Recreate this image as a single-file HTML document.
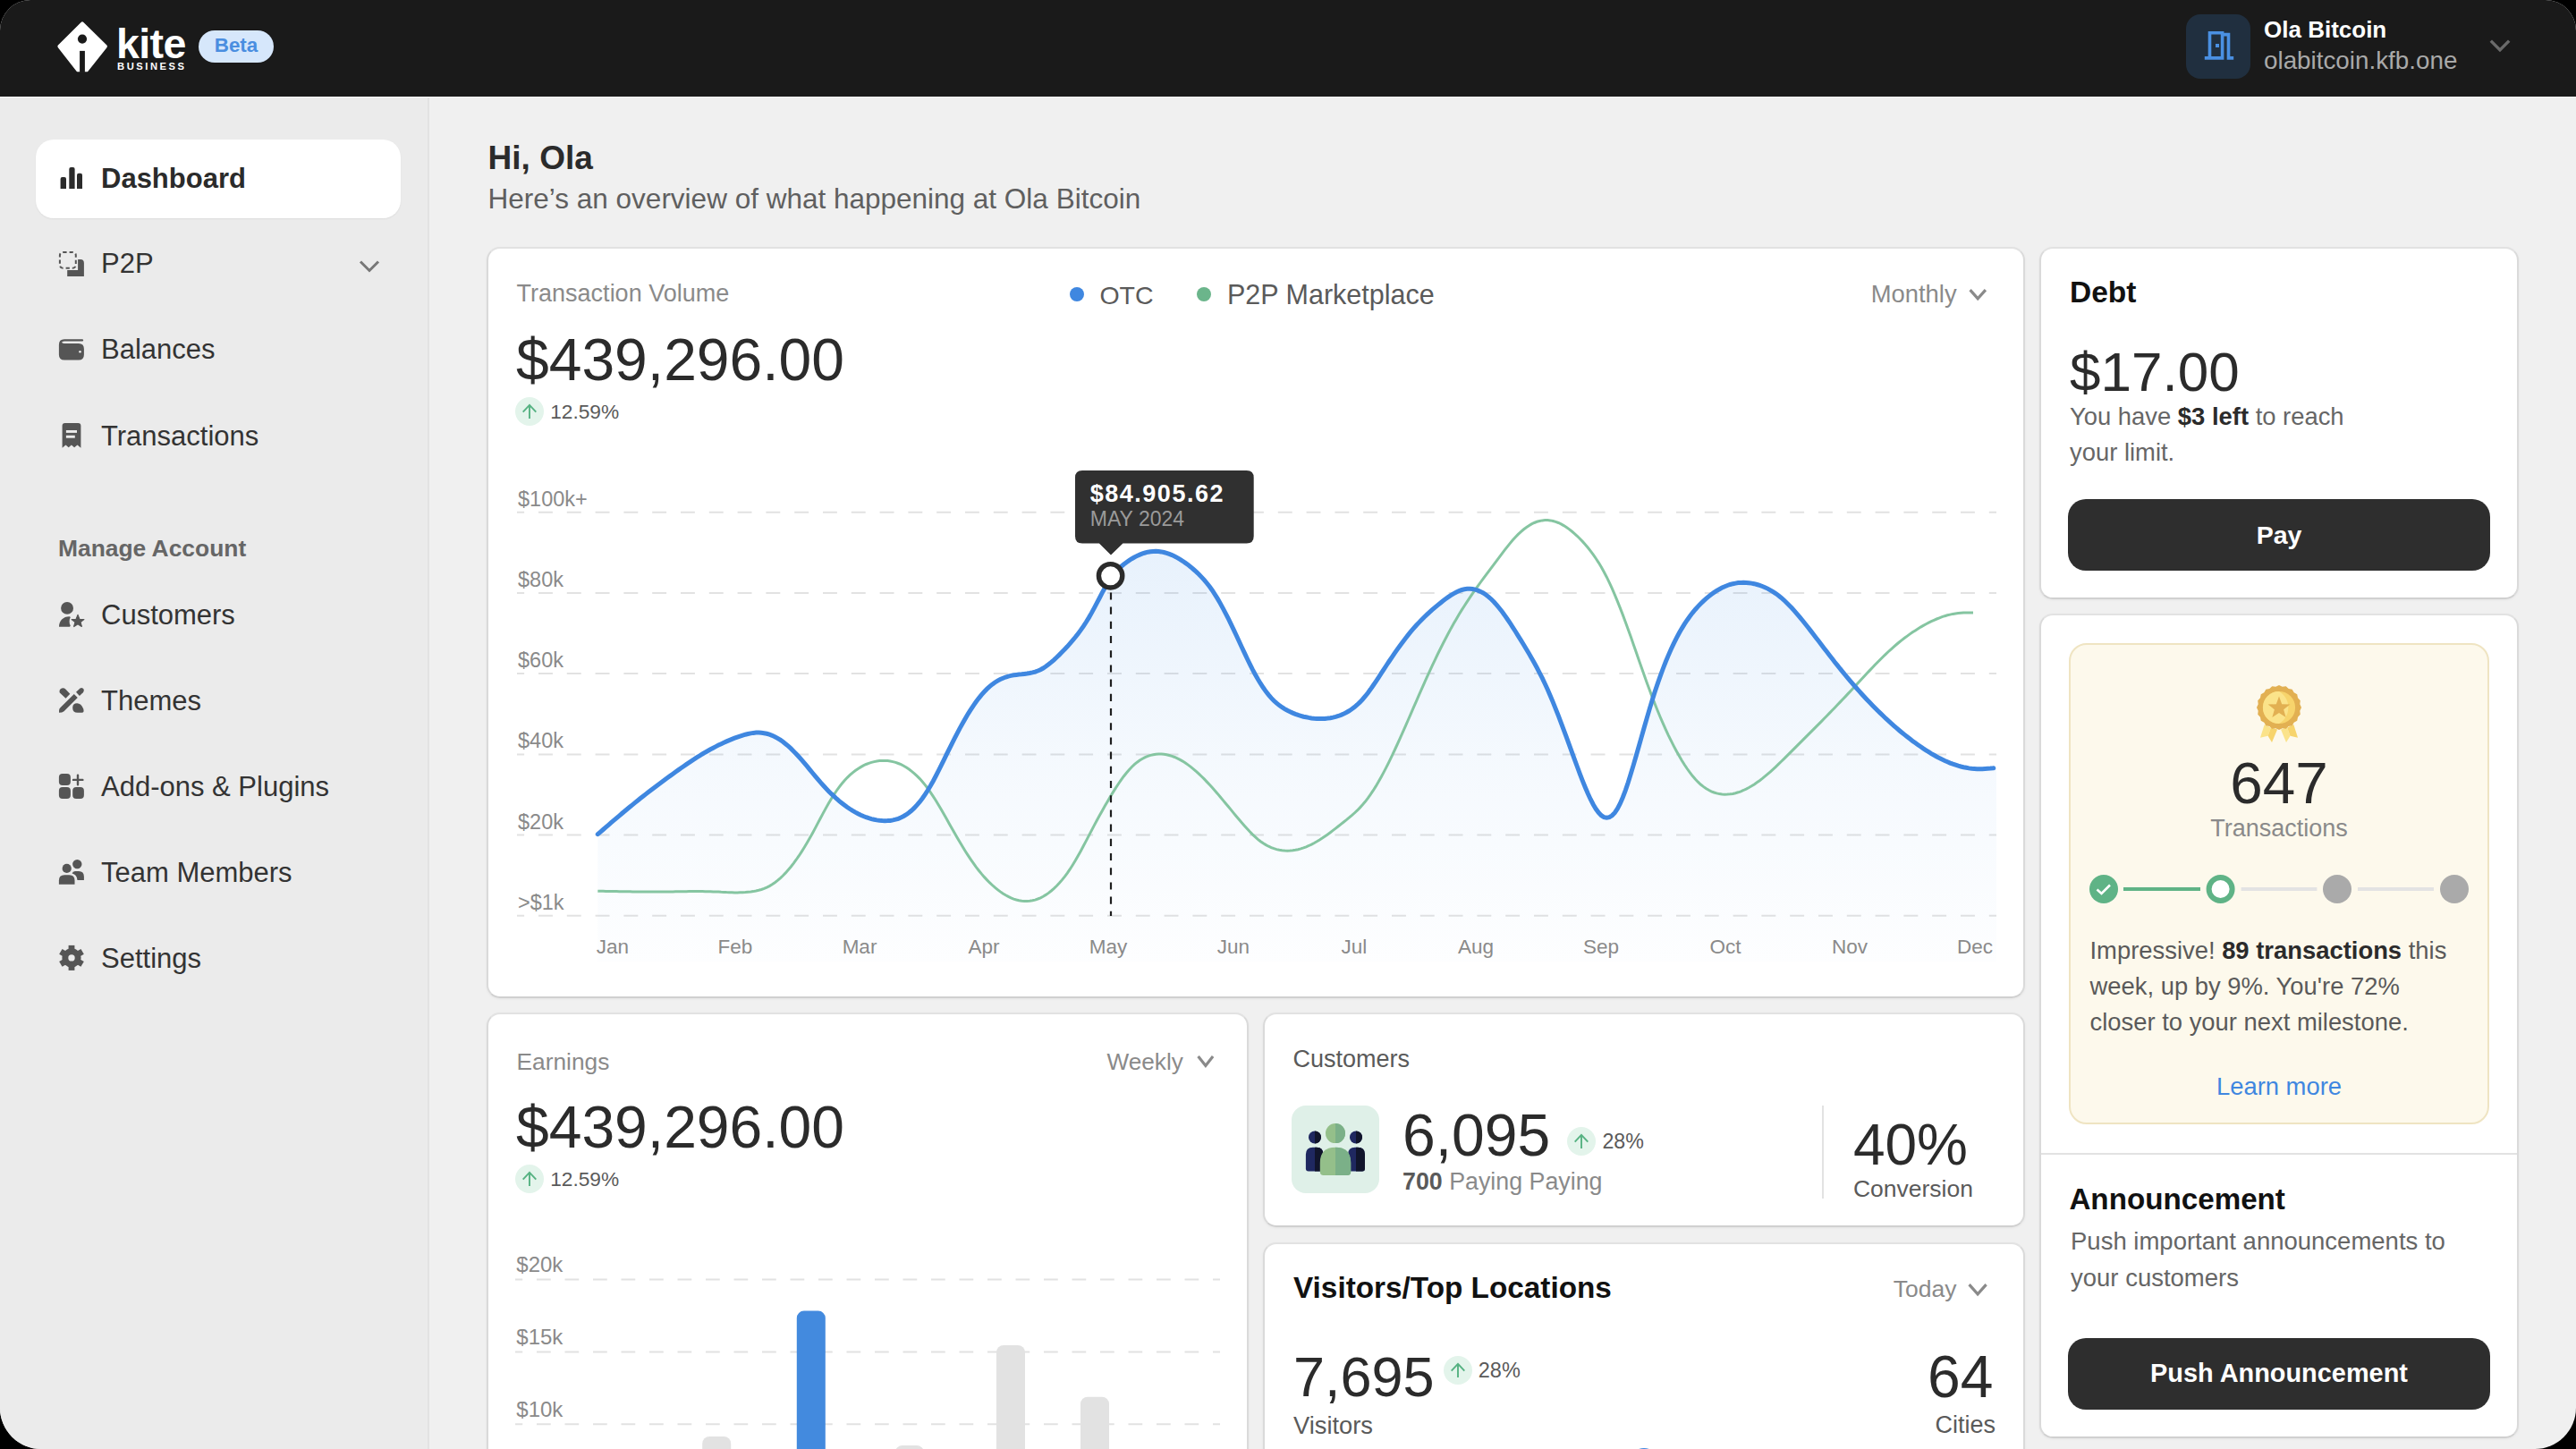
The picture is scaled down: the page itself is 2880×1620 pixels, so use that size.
<!DOCTYPE html>
<html><head><meta charset="utf-8"><title>Kite Business Dashboard</title>
<style>
html,body{margin:0;padding:0;}
body{width:2880px;height:1620px;position:relative;overflow:hidden;background:#000;font-family:"Liberation Sans",sans-serif;}
.t{position:absolute;white-space:nowrap;line-height:1;}
b{font-weight:700;}
</style></head><body>
<div style="position:absolute;left:0;top:0;width:2880px;height:1620px;background:#f0f0f0;border-radius:34px 34px 46px 46px;overflow:hidden;"><div style="position:absolute;left:0px;top:108px;width:480px;height:1512px;background:#ebebeb;"></div><div style="position:absolute;left:478px;top:108px;width:2px;height:1512px;background:#e2e2e2;"></div><div style="position:absolute;left:0px;top:0px;width:2880px;height:108px;background:#1a1a1a;"></div><div style="position:absolute;left:0px;top:108px;width:2880px;height:1px;background:#ffffff;"></div></div><svg style="position:absolute;left:56px;top:18px;" width="80" height="70" viewBox="0 0 80 70">
<path d="M34.6,7 Q36,5.6 37.4,7 L63.4,32.5 Q64.6,33.8 63.4,35.2 L42.6,61.4 Q41.9,62.3 41,62.3 L31,62.3 Q30.1,62.3 29.4,61.4 L8.9,35.2 Q7.7,33.8 8.9,32.5 Z" fill="#fff"/>
<circle cx="36" cy="25.6" r="5.1" fill="#1a1a1a"/>
<rect x="33.1" y="38.9" width="5.8" height="24" fill="#1a1a1a"/>
</svg><div class="t" style="font-size:46.5px;color:#fff;font-weight:700;top:26.33px;letter-spacing:-0.6px;left:130px;">kite</div><div class="t" style="font-size:11.2px;color:#fff;font-weight:700;top:68.82px;letter-spacing:2.55px;left:131px;">BUSINESS</div><div style="position:absolute;left:222px;top:34px;width:84px;height:36px;background:#d6e7fb;border-radius:18px;"></div><div class="t" style="font-size:22.4px;color:#4a8ee0;font-weight:700;top:39.73px;left:-336px;width:1200px;text-align:center;">Beta</div><div style="position:absolute;left:2444px;top:16px;width:72px;height:72px;background:#202f3f;border-radius:16px;"></div><svg style="position:absolute;left:2440px;top:12px;" width="80" height="80" viewBox="0 0 80 80">
<g fill="none" stroke="#4a90e2" stroke-width="3.6">
<path d="M24.8,52.9 L44.6,52.9 L44.6,24.8 L30.5,24.8 L30.5,52.9"/>
<path d="M44.6,26.6 L51.5,26.6 L51.5,52.9 L57.2,52.9"/>
</g>
<rect x="37" y="37" width="4" height="4" fill="#4a90e2"/>
</svg><div class="t" style="font-size:26px;color:#ffffff;font-weight:700;top:19.89px;left:2531px;">Ola Bitcoin</div><div class="t" style="font-size:27.8px;color:#a9a9a9;font-weight:400;top:54.36px;left:2531px;">olabitcoin.kfb.one</div><svg style="position:absolute;left:2780px;top:40px;" width="30" height="24" viewBox="0 0 30 24"><path d="M4.8,5.6 L15,15.8 L25.2,5.6" fill="none" stroke="#6a6a6a" stroke-width="3.4"/></svg><div style="position:absolute;left:40px;top:156px;width:408px;height:88px;background:#fff;border-radius:20px;box-shadow:0 1px 2px rgba(0,0,0,0.06);"></div><svg style="position:absolute;left:56px;top:174px;" width="48" height="48" viewBox="0 0 48 48"><g fill="#2b2b2b">
<path d="M11.6,26 Q11.6,24 13.6,24 L16,24 Q18,24 18,26 L18,37 L11.6,37 Z"/>
<path d="M21.3,15 Q21.3,13 23.3,13 L25.6,13 Q27.6,13 27.6,15 L27.6,37 L21.3,37 Z"/>
<path d="M30,21.8 Q30,19.8 32,19.8 L34,19.8 Q36,19.8 36,21.8 L36,37 L30,37 Z"/>
</g></svg><div class="t" style="font-size:31px;color:#2b2b2b;font-weight:700;top:184.15px;left:113px;">Dashboard</div><svg style="position:absolute;left:56px;top:270px;" width="48" height="48" viewBox="0 0 48 48">
<rect x="10.9" y="11.9" width="17.9" height="17.9" rx="3.5" fill="none" stroke="#555555" stroke-width="2" stroke-dasharray="4.2 3"/>
<path d="M31.1,20 L34,20 Q37.9,20 37.9,24 L37.9,38.9 L19.2,38.9 L19.2,32.1 L31.1,32.1 Z" fill="#555555"/>
</svg><div class="t" style="font-size:31px;color:#333;font-weight:400;top:279.35px;left:113px;">P2P</div><svg style="position:absolute;left:398px;top:286px;" width="30" height="24" viewBox="0 0 30 24"><path d="M5,6.5 L15,16.5 L25,6.5" fill="none" stroke="#777" stroke-width="3"/></svg><svg style="position:absolute;left:56px;top:366px;" width="48" height="48" viewBox="0 0 48 48">
<path d="M16,18 L32,18 Q37.9,18 37.9,24 L37.9,30.6 Q37.9,36.6 32,36.6 L16,36.6 Q9.9,36.6 9.9,30.6 L9.9,19.5 Q9.9,13.2 16,13.2 L36.5,13.2 Q38,14.4 36.5,15.6 L16,15.6 Q12.5,15.6 13.5,17.2 Q14.2,18 16,18 Z" fill="#555555"/>
<circle cx="33.5" cy="27.3" r="1.3" fill="#ebebeb"/>
</svg><div class="t" style="font-size:31px;color:#333;font-weight:400;top:375.45px;left:113px;">Balances</div><svg style="position:absolute;left:56px;top:462px;" width="48" height="48" viewBox="0 0 48 48">
<path d="M13.6,14 Q13.6,10.9 16.6,10.9 L31.4,10.9 Q34.4,10.9 34.4,14 L34.4,38.7 L30.5,35.6 L27.1,38.2 L23.9,35.6 L20.7,38.2 L17.5,35.6 L13.6,38.7 Z" fill="#555555"/>
<rect x="17.9" y="19" width="12.1" height="2.9" fill="#ebebeb"/>
<rect x="17.9" y="24.8" width="9.9" height="2.9" fill="#ebebeb"/>
</svg><div class="t" style="font-size:31px;color:#333;font-weight:400;top:471.75px;left:113px;">Transactions</div><div class="t" style="font-size:26.4px;color:#666;font-weight:700;top:600.25px;left:65px;">Manage Account</div><svg style="position:absolute;left:56px;top:664px;" width="48" height="48" viewBox="0 0 48 48"><g fill="#555555">
<circle cx="19.05" cy="15.9" r="6.95"/>
<path d="M10,36.8 C10,30 14.5,25.2 21.8,25.2 L22.8,26.1 C21.2,28.8 21.2,33.2 22.8,35.6 L22,36.8 Z"/>
<path d="M31,23.4 L32.9,28.3 L37.9,28.5 L34,31.6 L35.3,36.5 L31,33.8 L26.7,36.5 L28,31.6 L24.1,28.5 L29.1,28.3 Z" stroke="#555555" stroke-width="1.2" stroke-linejoin="round"/>
</g></svg><div class="t" style="font-size:31px;color:#333;font-weight:400;top:672.35px;left:113px;">Customers</div><svg style="position:absolute;left:56px;top:760px;" width="48" height="48" viewBox="0 0 48 48"><g fill="#555555">
<path d="M10.6,14.2 Q10,11 13,9.6 Q15.5,8.7 17.3,10.6 L22.3,15.8 L17.5,20.8 L11.6,15.3 Z"/>
<path d="M29,13.8 L33.5,9.6 Q36,8 37.5,10.5 Q38.5,12.5 36.8,14.3 L32.9,18 Z"/>
<path d="M26.8,16 L30.8,19.9 L15.5,35.3 Q13.5,36.8 10,36.8 L10,34.5 Q10,32.2 11.6,30.9 Z"/>
<path d="M25.2,31.3 Q25.2,26.2 30.2,26.2 Q34.6,26.2 37.2,32.5 Q38.5,36.8 35.5,36.8 L30.8,36.8 Q25.2,36.8 25.2,31.3 Z"/>
</g></svg><div class="t" style="font-size:31px;color:#333;font-weight:400;top:767.75px;left:113px;">Themes</div><svg style="position:absolute;left:56px;top:856px;" width="48" height="48" viewBox="0 0 48 48"><g fill="#555555">
<rect x="9.9" y="8.9" width="13" height="13" rx="4"/>
<rect x="9.9" y="24" width="13" height="12.9" rx="4"/>
<rect x="25.2" y="24" width="12.7" height="12.9" rx="4"/>
</g>
<g stroke="#555555" stroke-width="2.4" stroke-linecap="round"><path d="M26,15.9 L36.4,15.9 M31,10.6 L31,21.2"/></g></svg><div class="t" style="font-size:31px;color:#333;font-weight:400;top:863.75px;left:113px;">Add-ons &amp; Plugins</div><svg style="position:absolute;left:56px;top:952px;" width="48" height="48" viewBox="0 0 48 48"><g fill="#555555">
<circle cx="18.7" cy="18.9" r="5.1"/>
<path d="M9.9,32.5 Q9.9,26.3 16,26.3 L21.5,26.3 Q27.5,26.3 27.5,32.5 L27.5,36.8 L9.9,36.8 Z"/>
<circle cx="30.3" cy="14.1" r="5.2"/>
<path d="M24.6,24.6 Q25.3,21.9 28,21.9 L32,21.9 Q37.9,21.9 37.9,28 L37.9,32 L30.5,32 Q30,26 24.6,24.6 Z"/>
</g></svg><div class="t" style="font-size:31px;color:#333;font-weight:400;top:959.75px;left:113px;">Team Members</div><svg style="position:absolute;left:56px;top:1048px;" width="48" height="48" viewBox="0 0 48 48"><g transform="translate(24,22.9)" fill="#555555"><circle r="10.6"/><rect x="-3.4" y="-14" width="6.8" height="7" transform="rotate(0)"/><rect x="-3.4" y="-14" width="6.8" height="7" transform="rotate(60)"/><rect x="-3.4" y="-14" width="6.8" height="7" transform="rotate(120)"/><rect x="-3.4" y="-14" width="6.8" height="7" transform="rotate(180)"/><rect x="-3.4" y="-14" width="6.8" height="7" transform="rotate(240)"/><rect x="-3.4" y="-14" width="6.8" height="7" transform="rotate(300)"/><circle r="3.7" fill="#ebebeb"/></g></svg><div class="t" style="font-size:31px;color:#333;font-weight:400;top:1055.75px;left:113px;">Settings</div><div class="t" style="font-size:37px;color:#2b2b2b;font-weight:700;top:158.17px;left:545.6px;">Hi, Ola</div><div class="t" style="font-size:31.5px;color:#5f5f5f;font-weight:400;top:207.33px;left:545.6px;">Here’s an overview of what happening at Ola Bitcoin</div><div style="position:absolute;left:544px;top:276px;width:1720px;height:840px;background:#fff;border:2px solid #dadada;border-top-color:#e2e2e2;border-bottom-color:#d0d0d0;border-radius:15px;box-sizing:border-box;box-shadow:0 1px 3px rgba(0,0,0,0.05);"></div><div class="t" style="font-size:27px;color:#8a8a8a;font-weight:400;top:314.94px;left:577.6px;">Transaction Volume</div><svg style="position:absolute;left:1196px;top:320.7px;" width="16" height="16" viewBox="0 0 16 16"><circle cx="8" cy="8" r="8" fill="#3f87e0"/></svg><div class="t" style="font-size:28.5px;color:#5a5a5a;font-weight:400;top:316.07px;left:1229.4px;">OTC</div><svg style="position:absolute;left:1338px;top:320.7px;" width="16" height="16" viewBox="0 0 16 16"><circle cx="8" cy="8" r="8" fill="#6bb58b"/></svg><div class="t" style="font-size:30.5px;color:#5a5a5a;font-weight:400;top:314.38px;left:1372px;">P2P Marketplace</div><div class="t" style="font-size:27.4px;color:#8a8a8a;font-weight:400;top:314.60px;left:2091.7px;">Monthly</div><svg style="position:absolute;left:2196.7px;top:318.6px;" width="28.5" height="19.899999999999977" viewBox="0 0 28.5 19.899999999999977"><path d="M5.6,5.1 L14.2,14.8 L22.9,5.1" fill="none" stroke="#8a8a8a" stroke-width="3.2"/></svg><div class="t" style="font-size:66px;color:#2b2b2b;font-weight:400;top:369.12px;left:577px;">$439,296.00</div><svg style="position:absolute;left:576px;top:443.8px;" width="32" height="32" viewBox="0 0 32 32"><circle cx="16" cy="16" r="16" fill="#e3f4eb"/><path d="M16,24 L16,8.8 M8.7,16.7 L16,8.8 L23.3,16.7" fill="none" stroke="#56b282" stroke-width="1.9"/></svg><div class="t" style="font-size:22.7px;color:#5a5a5a;font-weight:400;top:448.58px;left:615.2px;">12.59%</div><svg style="position:absolute;left:0px;top:0px;pointer-events:none;" width="2880" height="1620" viewBox="0 0 2880 1620">
<defs><linearGradient id="ga" x1="0" y1="617" x2="0" y2="1075" gradientUnits="userSpaceOnUse">
<stop offset="0" stop-color="#3d8fe8" stop-opacity="0.12"/><stop offset="0.5" stop-color="#3d8fe8" stop-opacity="0.055"/><stop offset="1" stop-color="#3d8fe8" stop-opacity="0.01"/></linearGradient></defs>
<line x1="578" y1="572.7" x2="2232" y2="572.7" stroke="#e2e2e2" stroke-width="2" stroke-dasharray="15.9 15.9" stroke-dashoffset="7.8"/><line x1="578" y1="662.9" x2="2232" y2="662.9" stroke="#e2e2e2" stroke-width="2" stroke-dasharray="15.9 15.9" stroke-dashoffset="7.8"/><line x1="578" y1="753.1" x2="2232" y2="753.1" stroke="#e2e2e2" stroke-width="2" stroke-dasharray="15.9 15.9" stroke-dashoffset="7.8"/><line x1="578" y1="843.4" x2="2232" y2="843.4" stroke="#e2e2e2" stroke-width="2" stroke-dasharray="15.9 15.9" stroke-dashoffset="7.8"/><line x1="578" y1="933.6" x2="2232" y2="933.6" stroke="#e2e2e2" stroke-width="2" stroke-dasharray="15.9 15.9" stroke-dashoffset="7.8"/><line x1="578" y1="1023.8" x2="2232" y2="1023.8" stroke="#e2e2e2" stroke-width="2" stroke-dasharray="15.9 15.9" stroke-dashoffset="7.8"/>
<path d="M668.3,932.7 L671.3,930.1 L674.3,927.5 L677.3,924.9 L680.3,922.3 L683.3,919.7 L686.3,917.2 L689.3,914.6 L692.3,912.1 L695.3,909.5 L698.3,907.0 L701.3,904.5 L704.3,902.0 L707.3,899.6 L710.3,897.1 L713.3,894.7 L716.3,892.3 L719.3,890.0 L722.3,887.6 L725.3,885.3 L728.3,883.0 L731.3,880.7 L734.3,878.4 L737.3,876.2 L740.3,874.0 L743.3,871.7 L746.3,869.5 L749.3,867.4 L752.3,865.2 L755.3,863.0 L758.3,860.9 L761.3,858.8 L764.3,856.7 L767.3,854.6 L770.3,852.6 L773.3,850.6 L776.3,848.7 L779.3,846.7 L782.3,844.9 L785.3,843.0 L788.3,841.2 L791.3,839.5 L794.3,837.8 L797.3,836.2 L800.3,834.6 L803.3,833.1 L806.3,831.7 L809.3,830.3 L812.3,828.9 L815.3,827.6 L818.3,826.4 L821.3,825.2 L824.3,824.1 L827.3,823.1 L830.3,822.1 L833.3,821.2 L836.3,820.5 L839.3,819.9 L842.3,819.4 L845.3,819.1 L848.3,819.1 L851.3,819.3 L854.3,819.7 L857.3,820.3 L860.3,821.2 L863.3,822.3 L866.3,823.7 L869.3,825.3 L872.3,827.2 L875.3,829.3 L878.3,831.7 L881.3,834.2 L884.3,836.9 L887.3,839.9 L890.3,843.0 L893.3,846.3 L896.3,849.7 L899.3,853.2 L902.3,856.7 L905.3,860.4 L908.3,864.0 L911.3,867.6 L914.3,871.2 L917.3,874.7 L920.3,878.0 L923.3,881.3 L926.3,884.4 L929.3,887.4 L932.3,890.2 L935.3,893.0 L938.3,895.6 L941.3,898.0 L944.3,900.3 L947.3,902.5 L950.3,904.5 L953.3,906.4 L956.3,908.1 L959.3,909.7 L962.3,911.2 L965.3,912.5 L968.3,913.7 L971.3,914.7 L974.3,915.6 L977.3,916.3 L980.3,916.9 L983.3,917.3 L986.3,917.6 L989.3,917.7 L992.3,917.6 L995.3,917.4 L998.3,916.9 L1001.3,916.2 L1004.3,915.3 L1007.3,914.0 L1010.3,912.5 L1013.3,910.7 L1016.3,908.5 L1019.3,906.0 L1022.3,903.2 L1025.3,899.9 L1028.3,896.4 L1031.3,892.5 L1034.3,888.2 L1037.3,883.5 L1040.3,878.5 L1043.3,873.2 L1046.3,867.5 L1049.3,861.7 L1052.3,855.7 L1055.3,849.6 L1058.3,843.4 L1061.3,837.3 L1064.3,831.3 L1067.3,825.4 L1070.3,819.6 L1073.3,813.9 L1076.3,808.5 L1079.3,803.2 L1082.3,798.1 L1085.3,793.4 L1088.3,788.8 L1091.3,784.6 L1094.3,780.6 L1097.3,776.9 L1100.3,773.5 L1103.3,770.4 L1106.3,767.7 L1109.3,765.2 L1112.3,763.0 L1115.3,761.1 L1118.3,759.5 L1121.3,758.2 L1124.3,757.0 L1127.3,756.1 L1130.3,755.4 L1133.3,754.8 L1136.3,754.4 L1139.3,754.1 L1142.3,753.8 L1145.3,753.4 L1148.3,753.0 L1151.3,752.5 L1154.3,751.9 L1157.3,751.1 L1160.3,750.0 L1163.3,748.7 L1166.3,747.0 L1169.3,745.0 L1172.3,742.8 L1175.3,740.4 L1178.3,737.8 L1181.3,735.0 L1184.3,732.1 L1187.3,729.1 L1190.3,726.0 L1193.3,722.8 L1196.3,719.4 L1199.3,715.9 L1202.3,712.3 L1205.3,708.4 L1208.3,704.4 L1211.3,700.1 L1214.3,695.5 L1217.3,690.6 L1220.3,685.4 L1223.3,679.9 L1226.3,674.2 L1229.3,668.5 L1232.3,662.7 L1235.3,657.2 L1238.3,652.0 L1241.3,647.2 L1244.3,643.1 L1247.3,639.4 L1250.3,636.3 L1253.3,633.5 L1256.3,631.0 L1259.3,628.7 L1262.3,626.6 L1265.3,624.7 L1268.3,623.0 L1271.3,621.4 L1274.3,620.1 L1277.3,618.9 L1280.3,618.0 L1283.3,617.2 L1286.3,616.7 L1289.3,616.4 L1292.3,616.3 L1295.3,616.5 L1298.3,616.9 L1301.3,617.5 L1304.3,618.3 L1307.3,619.4 L1310.3,620.6 L1313.3,622.0 L1316.3,623.6 L1319.3,625.4 L1322.3,627.3 L1325.3,629.4 L1328.3,631.6 L1331.3,633.9 L1334.3,636.5 L1337.3,639.1 L1340.3,642.0 L1343.3,645.1 L1346.3,648.4 L1349.3,652.0 L1352.3,655.8 L1355.3,660.0 L1358.3,664.6 L1361.3,669.4 L1364.3,674.6 L1367.3,680.1 L1370.3,685.8 L1373.3,691.7 L1376.3,697.8 L1379.3,704.1 L1382.3,710.5 L1385.3,717.0 L1388.3,723.5 L1391.3,729.9 L1394.3,736.3 L1397.3,742.4 L1400.3,748.4 L1403.3,754.0 L1406.3,759.3 L1409.3,764.2 L1412.3,768.8 L1415.3,773.1 L1418.3,776.9 L1421.3,780.4 L1424.3,783.5 L1427.3,786.2 L1430.3,788.6 L1433.3,790.7 L1436.3,792.6 L1439.3,794.3 L1442.3,795.7 L1445.3,797.1 L1448.3,798.3 L1451.3,799.4 L1454.3,800.3 L1457.3,801.2 L1460.3,801.8 L1463.3,802.4 L1466.3,802.9 L1469.3,803.2 L1472.3,803.4 L1475.3,803.5 L1478.3,803.5 L1481.3,803.4 L1484.3,803.1 L1487.3,802.7 L1490.3,802.1 L1493.3,801.4 L1496.3,800.5 L1499.3,799.4 L1502.3,798.1 L1505.3,796.5 L1508.3,794.8 L1511.3,792.8 L1514.3,790.6 L1517.3,788.0 L1520.3,785.2 L1523.3,782.0 L1526.3,778.5 L1529.3,774.7 L1532.3,770.6 L1535.3,766.3 L1538.3,761.8 L1541.3,757.3 L1544.3,752.7 L1547.3,748.1 L1550.3,743.5 L1553.3,739.0 L1556.3,734.6 L1559.3,730.2 L1562.3,725.9 L1565.3,721.7 L1568.3,717.7 L1571.3,713.7 L1574.3,709.9 L1577.3,706.2 L1580.3,702.7 L1583.3,699.3 L1586.3,696.1 L1589.3,693.0 L1592.3,690.0 L1595.3,687.2 L1598.3,684.4 L1601.3,681.7 L1604.3,679.1 L1607.3,676.6 L1610.3,674.2 L1613.3,671.8 L1616.3,669.6 L1619.3,667.4 L1622.3,665.4 L1625.3,663.6 L1628.3,662.0 L1631.3,660.6 L1634.3,659.5 L1637.3,658.8 L1640.3,658.3 L1643.3,658.2 L1646.3,658.5 L1649.3,659.1 L1652.3,660.1 L1655.3,661.4 L1658.3,663.0 L1661.3,665.0 L1664.3,667.3 L1667.3,670.0 L1670.3,673.0 L1673.3,676.4 L1676.3,680.0 L1679.3,683.8 L1682.3,687.9 L1685.3,692.2 L1688.3,696.7 L1691.3,701.3 L1694.3,706.0 L1697.3,710.8 L1700.3,715.6 L1703.3,720.5 L1706.3,725.5 L1709.3,730.5 L1712.3,735.7 L1715.3,741.0 L1718.3,746.5 L1721.3,752.3 L1724.3,758.2 L1727.3,764.5 L1730.3,771.0 L1733.3,777.9 L1736.3,785.1 L1739.3,792.6 L1742.3,800.2 L1745.3,808.1 L1748.3,816.1 L1751.3,824.2 L1754.3,832.4 L1757.3,840.7 L1760.3,848.9 L1763.3,857.0 L1766.3,865.1 L1769.3,872.9 L1772.3,880.3 L1775.3,887.3 L1778.3,893.7 L1781.3,899.5 L1784.3,904.5 L1787.3,908.6 L1790.3,911.7 L1793.3,913.6 L1796.3,914.3 L1799.3,913.7 L1802.3,911.8 L1805.3,908.6 L1808.3,904.1 L1811.3,898.4 L1814.3,891.5 L1817.3,883.6 L1820.3,874.7 L1823.3,865.1 L1826.3,855.1 L1829.3,844.7 L1832.3,834.2 L1835.3,823.6 L1838.3,813.0 L1841.3,802.6 L1844.3,792.4 L1847.3,782.6 L1850.3,773.1 L1853.3,764.1 L1856.3,755.6 L1859.3,747.5 L1862.3,739.8 L1865.3,732.6 L1868.3,725.8 L1871.3,719.4 L1874.3,713.4 L1877.3,707.8 L1880.3,702.6 L1883.3,697.7 L1886.3,693.2 L1889.3,689.0 L1892.3,685.1 L1895.3,681.5 L1898.3,678.1 L1901.3,675.0 L1904.3,672.1 L1907.3,669.4 L1910.3,666.9 L1913.3,664.5 L1916.3,662.4 L1919.3,660.4 L1922.3,658.7 L1925.3,657.1 L1928.3,655.7 L1931.3,654.5 L1934.3,653.5 L1937.3,652.7 L1940.3,652.1 L1943.3,651.6 L1946.3,651.4 L1949.3,651.3 L1952.3,651.4 L1955.3,651.7 L1958.3,652.1 L1961.3,652.7 L1964.3,653.5 L1967.3,654.4 L1970.3,655.5 L1973.3,656.7 L1976.3,658.1 L1979.3,659.8 L1982.3,661.6 L1985.3,663.6 L1988.3,665.8 L1991.3,668.2 L1994.3,670.8 L1997.3,673.7 L2000.3,676.7 L2003.3,679.8 L2006.3,683.1 L2009.3,686.6 L2012.3,690.1 L2015.3,693.8 L2018.3,697.5 L2021.3,701.3 L2024.3,705.1 L2027.3,709.0 L2030.3,712.9 L2033.3,716.8 L2036.3,720.7 L2039.3,724.7 L2042.3,728.6 L2045.3,732.5 L2048.3,736.3 L2051.3,740.2 L2054.3,743.9 L2057.3,747.7 L2060.3,751.3 L2063.3,755.0 L2066.3,758.6 L2069.3,762.1 L2072.3,765.6 L2075.3,769.0 L2078.3,772.4 L2081.3,775.7 L2084.3,779.0 L2087.3,782.2 L2090.3,785.3 L2093.3,788.4 L2096.3,791.5 L2099.3,794.5 L2102.3,797.4 L2105.3,800.3 L2108.3,803.2 L2111.3,805.9 L2114.3,808.6 L2117.3,811.3 L2120.3,813.9 L2123.3,816.5 L2126.3,819.0 L2129.3,821.4 L2132.3,823.8 L2135.3,826.1 L2138.3,828.4 L2141.3,830.6 L2144.3,832.7 L2147.3,834.8 L2150.3,836.9 L2153.3,838.8 L2156.3,840.7 L2159.3,842.6 L2162.3,844.3 L2165.3,846.0 L2168.3,847.6 L2171.3,849.1 L2174.3,850.5 L2177.3,851.8 L2180.3,853.1 L2183.3,854.2 L2186.3,855.2 L2189.3,856.2 L2192.3,857.0 L2195.3,857.7 L2198.3,858.3 L2201.3,858.9 L2204.3,859.3 L2207.3,859.5 L2210.3,859.7 L2213.3,859.7 L2216.3,859.7 L2219.3,859.5 L2222.3,859.3 L2225.3,859.1 L2228.3,858.8 L2228.8,858.7 L2232,858.7 L2232,1075 L668.3,1075 Z" fill="url(#ga)"/>
<path d="M668.3,996.2 L671.3,996.3 L674.3,996.3 L677.3,996.4 L680.3,996.4 L683.3,996.5 L686.3,996.5 L689.3,996.6 L692.3,996.7 L695.3,996.7 L698.3,996.7 L701.3,996.8 L704.3,996.8 L707.3,996.9 L710.3,996.9 L713.3,996.9 L716.3,997.0 L719.3,997.0 L722.3,997.0 L725.3,997.0 L728.3,997.0 L731.3,997.0 L734.3,997.0 L737.3,997.0 L740.3,997.0 L743.3,997.0 L746.3,996.9 L749.3,996.9 L752.3,996.9 L755.3,996.8 L758.3,996.8 L761.3,996.7 L764.3,996.7 L767.3,996.7 L770.3,996.6 L773.3,996.6 L776.3,996.6 L779.3,996.6 L782.3,996.6 L785.3,996.6 L788.3,996.7 L791.3,996.7 L794.3,996.8 L797.3,996.9 L800.3,997.0 L803.3,997.1 L806.3,997.3 L809.3,997.4 L812.3,997.6 L815.3,997.7 L818.3,997.8 L821.3,997.9 L824.3,997.9 L827.3,997.8 L830.3,997.7 L833.3,997.6 L836.3,997.3 L839.3,997.0 L842.3,996.6 L845.3,996.0 L848.3,995.3 L851.3,994.5 L854.3,993.4 L857.3,992.1 L860.3,990.6 L863.3,988.8 L866.3,986.7 L869.3,984.4 L872.3,981.8 L875.3,979.0 L878.3,975.9 L881.3,972.5 L884.3,969.0 L887.3,965.1 L890.3,961.0 L893.3,956.7 L896.3,952.1 L899.3,947.3 L902.3,942.3 L905.3,937.1 L908.3,931.7 L911.3,926.1 L914.3,920.4 L917.3,914.7 L920.3,909.1 L923.3,903.6 L926.3,898.3 L929.3,893.3 L932.3,888.5 L935.3,884.0 L938.3,879.8 L941.3,876.0 L944.3,872.5 L947.3,869.3 L950.3,866.4 L953.3,863.8 L956.3,861.5 L959.3,859.4 L962.3,857.6 L965.3,855.9 L968.3,854.5 L971.3,853.3 L974.3,852.4 L977.3,851.6 L980.3,851.0 L983.3,850.6 L986.3,850.4 L989.3,850.4 L992.3,850.6 L995.3,851.0 L998.3,851.6 L1001.3,852.4 L1004.3,853.5 L1007.3,854.7 L1010.3,856.2 L1013.3,858.0 L1016.3,860.0 L1019.3,862.3 L1022.3,864.8 L1025.3,867.6 L1028.3,870.6 L1031.3,874.0 L1034.3,877.6 L1037.3,881.5 L1040.3,885.8 L1043.3,890.3 L1046.3,895.0 L1049.3,900.0 L1052.3,905.1 L1055.3,910.3 L1058.3,915.6 L1061.3,920.9 L1064.3,926.2 L1067.3,931.5 L1070.3,936.7 L1073.3,941.8 L1076.3,946.8 L1079.3,951.7 L1082.3,956.4 L1085.3,960.9 L1088.3,965.2 L1091.3,969.4 L1094.3,973.2 L1097.3,976.9 L1100.3,980.4 L1103.3,983.6 L1106.3,986.7 L1109.3,989.5 L1112.3,992.2 L1115.3,994.6 L1118.3,996.9 L1121.3,999.0 L1124.3,1000.8 L1127.3,1002.4 L1130.3,1003.9 L1133.3,1005.1 L1136.3,1006.0 L1139.3,1006.8 L1142.3,1007.3 L1145.3,1007.5 L1148.3,1007.5 L1151.3,1007.3 L1154.3,1006.8 L1157.3,1006.1 L1160.3,1005.0 L1163.3,1003.8 L1166.3,1002.2 L1169.3,1000.4 L1172.3,998.4 L1175.3,996.0 L1178.3,993.4 L1181.3,990.5 L1184.3,987.3 L1187.3,983.9 L1190.3,980.1 L1193.3,976.1 L1196.3,971.7 L1199.3,967.0 L1202.3,962.1 L1205.3,956.8 L1208.3,951.4 L1211.3,945.8 L1214.3,940.1 L1217.3,934.4 L1220.3,928.6 L1223.3,922.9 L1226.3,917.3 L1229.3,911.8 L1232.3,906.4 L1235.3,901.1 L1238.3,895.9 L1241.3,890.8 L1244.3,885.9 L1247.3,881.1 L1250.3,876.5 L1253.3,872.2 L1256.3,868.0 L1259.3,864.2 L1262.3,860.7 L1265.3,857.5 L1268.3,854.7 L1271.3,852.2 L1274.3,850.0 L1277.3,848.2 L1280.3,846.6 L1283.3,845.4 L1286.3,844.4 L1289.3,843.7 L1292.3,843.2 L1295.3,843.0 L1298.3,843.1 L1301.3,843.3 L1304.3,843.8 L1307.3,844.5 L1310.3,845.4 L1313.3,846.5 L1316.3,847.9 L1319.3,849.4 L1322.3,851.1 L1325.3,853.0 L1328.3,855.1 L1331.3,857.4 L1334.3,859.8 L1337.3,862.4 L1340.3,865.1 L1343.3,868.0 L1346.3,870.9 L1349.3,874.1 L1352.3,877.3 L1355.3,880.6 L1358.3,884.0 L1361.3,887.4 L1364.3,891.0 L1367.3,894.6 L1370.3,898.2 L1373.3,901.8 L1376.3,905.4 L1379.3,909.1 L1382.3,912.7 L1385.3,916.2 L1388.3,919.8 L1391.3,923.2 L1394.3,926.5 L1397.3,929.8 L1400.3,932.8 L1403.3,935.6 L1406.3,938.3 L1409.3,940.7 L1412.3,942.8 L1415.3,944.6 L1418.3,946.2 L1421.3,947.6 L1424.3,948.7 L1427.3,949.6 L1430.3,950.3 L1433.3,950.8 L1436.3,951.1 L1439.3,951.2 L1442.3,951.1 L1445.3,950.8 L1448.3,950.3 L1451.3,949.7 L1454.3,948.9 L1457.3,947.9 L1460.3,946.8 L1463.3,945.5 L1466.3,944.1 L1469.3,942.5 L1472.3,940.8 L1475.3,939.0 L1478.3,937.1 L1481.3,935.0 L1484.3,932.9 L1487.3,930.7 L1490.3,928.4 L1493.3,926.1 L1496.3,923.8 L1499.3,921.4 L1502.3,919.0 L1505.3,916.7 L1508.3,914.2 L1511.3,911.7 L1514.3,909.0 L1517.3,906.2 L1520.3,903.1 L1523.3,899.8 L1526.3,896.3 L1529.3,892.4 L1532.3,888.2 L1535.3,883.7 L1538.3,878.9 L1541.3,873.8 L1544.3,868.4 L1547.3,862.9 L1550.3,857.1 L1553.3,851.1 L1556.3,844.9 L1559.3,838.5 L1562.3,832.0 L1565.3,825.4 L1568.3,818.7 L1571.3,811.9 L1574.3,805.0 L1577.3,798.1 L1580.3,791.2 L1583.3,784.3 L1586.3,777.4 L1589.3,770.6 L1592.3,763.8 L1595.3,757.1 L1598.3,750.6 L1601.3,744.1 L1604.3,737.8 L1607.3,731.5 L1610.3,725.5 L1613.3,719.5 L1616.3,713.7 L1619.3,708.0 L1622.3,702.4 L1625.3,697.1 L1628.3,691.9 L1631.3,686.8 L1634.3,681.9 L1637.3,677.2 L1640.3,672.6 L1643.3,668.1 L1646.3,663.7 L1649.3,659.4 L1652.3,655.2 L1655.3,651.0 L1658.3,646.9 L1661.3,642.9 L1664.3,638.8 L1667.3,634.8 L1670.3,630.8 L1673.3,626.8 L1676.3,622.8 L1679.3,618.8 L1682.3,614.9 L1685.3,611.1 L1688.3,607.4 L1691.3,603.8 L1694.3,600.5 L1697.3,597.4 L1700.3,594.6 L1703.3,592.0 L1706.3,589.7 L1709.3,587.7 L1712.3,585.9 L1715.3,584.5 L1718.3,583.3 L1721.3,582.5 L1724.3,581.9 L1727.3,581.6 L1730.3,581.6 L1733.3,581.9 L1736.3,582.5 L1739.3,583.4 L1742.3,584.5 L1745.3,585.9 L1748.3,587.6 L1751.3,589.5 L1754.3,591.6 L1757.3,594.0 L1760.3,596.6 L1763.3,599.3 L1766.3,602.3 L1769.3,605.4 L1772.3,608.7 L1775.3,612.3 L1778.3,616.1 L1781.3,620.1 L1784.3,624.5 L1787.3,629.1 L1790.3,634.1 L1793.3,639.5 L1796.3,645.2 L1799.3,651.4 L1802.3,657.9 L1805.3,664.8 L1808.3,672.1 L1811.3,679.6 L1814.3,687.4 L1817.3,695.5 L1820.3,703.7 L1823.3,712.1 L1826.3,720.7 L1829.3,729.3 L1832.3,737.9 L1835.3,746.5 L1838.3,755.0 L1841.3,763.4 L1844.3,771.6 L1847.3,779.6 L1850.3,787.3 L1853.3,794.8 L1856.3,802.0 L1859.3,808.9 L1862.3,815.6 L1865.3,822.1 L1868.3,828.2 L1871.3,834.1 L1874.3,839.8 L1877.3,845.1 L1880.3,850.2 L1883.3,855.0 L1886.3,859.5 L1889.3,863.7 L1892.3,867.6 L1895.3,871.1 L1898.3,874.2 L1901.3,877.0 L1904.3,879.4 L1907.3,881.5 L1910.3,883.3 L1913.3,884.8 L1916.3,886.0 L1919.3,886.9 L1922.3,887.6 L1925.3,888.0 L1928.3,888.2 L1931.3,888.1 L1934.3,887.8 L1937.3,887.4 L1940.3,886.7 L1943.3,885.8 L1946.3,884.8 L1949.3,883.5 L1952.3,882.1 L1955.3,880.5 L1958.3,878.8 L1961.3,876.9 L1964.3,874.8 L1967.3,872.7 L1970.3,870.4 L1973.3,867.9 L1976.3,865.4 L1979.3,862.8 L1982.3,860.1 L1985.3,857.3 L1988.3,854.4 L1991.3,851.5 L1994.3,848.6 L1997.3,845.6 L2000.3,842.6 L2003.3,839.6 L2006.3,836.6 L2009.3,833.6 L2012.3,830.6 L2015.3,827.6 L2018.3,824.6 L2021.3,821.6 L2024.3,818.6 L2027.3,815.6 L2030.3,812.6 L2033.3,809.6 L2036.3,806.6 L2039.3,803.5 L2042.3,800.5 L2045.3,797.4 L2048.3,794.3 L2051.3,791.2 L2054.3,788.0 L2057.3,784.9 L2060.3,781.7 L2063.3,778.6 L2066.3,775.4 L2069.3,772.2 L2072.3,769.0 L2075.3,765.8 L2078.3,762.5 L2081.3,759.3 L2084.3,756.0 L2087.3,752.8 L2090.3,749.6 L2093.3,746.5 L2096.3,743.3 L2099.3,740.2 L2102.3,737.2 L2105.3,734.2 L2108.3,731.3 L2111.3,728.5 L2114.3,725.8 L2117.3,723.1 L2120.3,720.5 L2123.3,718.0 L2126.3,715.6 L2129.3,713.3 L2132.3,711.1 L2135.3,708.9 L2138.3,706.8 L2141.3,704.9 L2144.3,703.0 L2147.3,701.1 L2150.3,699.4 L2153.3,697.7 L2156.3,696.2 L2159.3,694.7 L2162.3,693.3 L2165.3,692.0 L2168.3,690.8 L2171.3,689.7 L2174.3,688.7 L2177.3,687.8 L2180.3,687.1 L2183.3,686.4 L2186.3,685.9 L2189.3,685.5 L2192.3,685.2 L2195.3,685.0 L2198.3,684.9 L2201.3,684.9 L2204.3,684.9 L2206.0,684.9" fill="none" stroke="#85c5a1" stroke-width="3"/>
<path d="M668.3,932.7 L671.3,930.1 L674.3,927.5 L677.3,924.9 L680.3,922.3 L683.3,919.7 L686.3,917.2 L689.3,914.6 L692.3,912.1 L695.3,909.5 L698.3,907.0 L701.3,904.5 L704.3,902.0 L707.3,899.6 L710.3,897.1 L713.3,894.7 L716.3,892.3 L719.3,890.0 L722.3,887.6 L725.3,885.3 L728.3,883.0 L731.3,880.7 L734.3,878.4 L737.3,876.2 L740.3,874.0 L743.3,871.7 L746.3,869.5 L749.3,867.4 L752.3,865.2 L755.3,863.0 L758.3,860.9 L761.3,858.8 L764.3,856.7 L767.3,854.6 L770.3,852.6 L773.3,850.6 L776.3,848.7 L779.3,846.7 L782.3,844.9 L785.3,843.0 L788.3,841.2 L791.3,839.5 L794.3,837.8 L797.3,836.2 L800.3,834.6 L803.3,833.1 L806.3,831.7 L809.3,830.3 L812.3,828.9 L815.3,827.6 L818.3,826.4 L821.3,825.2 L824.3,824.1 L827.3,823.1 L830.3,822.1 L833.3,821.2 L836.3,820.5 L839.3,819.9 L842.3,819.4 L845.3,819.1 L848.3,819.1 L851.3,819.3 L854.3,819.7 L857.3,820.3 L860.3,821.2 L863.3,822.3 L866.3,823.7 L869.3,825.3 L872.3,827.2 L875.3,829.3 L878.3,831.7 L881.3,834.2 L884.3,836.9 L887.3,839.9 L890.3,843.0 L893.3,846.3 L896.3,849.7 L899.3,853.2 L902.3,856.7 L905.3,860.4 L908.3,864.0 L911.3,867.6 L914.3,871.2 L917.3,874.7 L920.3,878.0 L923.3,881.3 L926.3,884.4 L929.3,887.4 L932.3,890.2 L935.3,893.0 L938.3,895.6 L941.3,898.0 L944.3,900.3 L947.3,902.5 L950.3,904.5 L953.3,906.4 L956.3,908.1 L959.3,909.7 L962.3,911.2 L965.3,912.5 L968.3,913.7 L971.3,914.7 L974.3,915.6 L977.3,916.3 L980.3,916.9 L983.3,917.3 L986.3,917.6 L989.3,917.7 L992.3,917.6 L995.3,917.4 L998.3,916.9 L1001.3,916.2 L1004.3,915.3 L1007.3,914.0 L1010.3,912.5 L1013.3,910.7 L1016.3,908.5 L1019.3,906.0 L1022.3,903.2 L1025.3,899.9 L1028.3,896.4 L1031.3,892.5 L1034.3,888.2 L1037.3,883.5 L1040.3,878.5 L1043.3,873.2 L1046.3,867.5 L1049.3,861.7 L1052.3,855.7 L1055.3,849.6 L1058.3,843.4 L1061.3,837.3 L1064.3,831.3 L1067.3,825.4 L1070.3,819.6 L1073.3,813.9 L1076.3,808.5 L1079.3,803.2 L1082.3,798.1 L1085.3,793.4 L1088.3,788.8 L1091.3,784.6 L1094.3,780.6 L1097.3,776.9 L1100.3,773.5 L1103.3,770.4 L1106.3,767.7 L1109.3,765.2 L1112.3,763.0 L1115.3,761.1 L1118.3,759.5 L1121.3,758.2 L1124.3,757.0 L1127.3,756.1 L1130.3,755.4 L1133.3,754.8 L1136.3,754.4 L1139.3,754.1 L1142.3,753.8 L1145.3,753.4 L1148.3,753.0 L1151.3,752.5 L1154.3,751.9 L1157.3,751.1 L1160.3,750.0 L1163.3,748.7 L1166.3,747.0 L1169.3,745.0 L1172.3,742.8 L1175.3,740.4 L1178.3,737.8 L1181.3,735.0 L1184.3,732.1 L1187.3,729.1 L1190.3,726.0 L1193.3,722.8 L1196.3,719.4 L1199.3,715.9 L1202.3,712.3 L1205.3,708.4 L1208.3,704.4 L1211.3,700.1 L1214.3,695.5 L1217.3,690.6 L1220.3,685.4 L1223.3,679.9 L1226.3,674.2 L1229.3,668.5 L1232.3,662.7 L1235.3,657.2 L1238.3,652.0 L1241.3,647.2 L1244.3,643.1 L1247.3,639.4 L1250.3,636.3 L1253.3,633.5 L1256.3,631.0 L1259.3,628.7 L1262.3,626.6 L1265.3,624.7 L1268.3,623.0 L1271.3,621.4 L1274.3,620.1 L1277.3,618.9 L1280.3,618.0 L1283.3,617.2 L1286.3,616.7 L1289.3,616.4 L1292.3,616.3 L1295.3,616.5 L1298.3,616.9 L1301.3,617.5 L1304.3,618.3 L1307.3,619.4 L1310.3,620.6 L1313.3,622.0 L1316.3,623.6 L1319.3,625.4 L1322.3,627.3 L1325.3,629.4 L1328.3,631.6 L1331.3,633.9 L1334.3,636.5 L1337.3,639.1 L1340.3,642.0 L1343.3,645.1 L1346.3,648.4 L1349.3,652.0 L1352.3,655.8 L1355.3,660.0 L1358.3,664.6 L1361.3,669.4 L1364.3,674.6 L1367.3,680.1 L1370.3,685.8 L1373.3,691.7 L1376.3,697.8 L1379.3,704.1 L1382.3,710.5 L1385.3,717.0 L1388.3,723.5 L1391.3,729.9 L1394.3,736.3 L1397.3,742.4 L1400.3,748.4 L1403.3,754.0 L1406.3,759.3 L1409.3,764.2 L1412.3,768.8 L1415.3,773.1 L1418.3,776.9 L1421.3,780.4 L1424.3,783.5 L1427.3,786.2 L1430.3,788.6 L1433.3,790.7 L1436.3,792.6 L1439.3,794.3 L1442.3,795.7 L1445.3,797.1 L1448.3,798.3 L1451.3,799.4 L1454.3,800.3 L1457.3,801.2 L1460.3,801.8 L1463.3,802.4 L1466.3,802.9 L1469.3,803.2 L1472.3,803.4 L1475.3,803.5 L1478.3,803.5 L1481.3,803.4 L1484.3,803.1 L1487.3,802.7 L1490.3,802.1 L1493.3,801.4 L1496.3,800.5 L1499.3,799.4 L1502.3,798.1 L1505.3,796.5 L1508.3,794.8 L1511.3,792.8 L1514.3,790.6 L1517.3,788.0 L1520.3,785.2 L1523.3,782.0 L1526.3,778.5 L1529.3,774.7 L1532.3,770.6 L1535.3,766.3 L1538.3,761.8 L1541.3,757.3 L1544.3,752.7 L1547.3,748.1 L1550.3,743.5 L1553.3,739.0 L1556.3,734.6 L1559.3,730.2 L1562.3,725.9 L1565.3,721.7 L1568.3,717.7 L1571.3,713.7 L1574.3,709.9 L1577.3,706.2 L1580.3,702.7 L1583.3,699.3 L1586.3,696.1 L1589.3,693.0 L1592.3,690.0 L1595.3,687.2 L1598.3,684.4 L1601.3,681.7 L1604.3,679.1 L1607.3,676.6 L1610.3,674.2 L1613.3,671.8 L1616.3,669.6 L1619.3,667.4 L1622.3,665.4 L1625.3,663.6 L1628.3,662.0 L1631.3,660.6 L1634.3,659.5 L1637.3,658.8 L1640.3,658.3 L1643.3,658.2 L1646.3,658.5 L1649.3,659.1 L1652.3,660.1 L1655.3,661.4 L1658.3,663.0 L1661.3,665.0 L1664.3,667.3 L1667.3,670.0 L1670.3,673.0 L1673.3,676.4 L1676.3,680.0 L1679.3,683.8 L1682.3,687.9 L1685.3,692.2 L1688.3,696.7 L1691.3,701.3 L1694.3,706.0 L1697.3,710.8 L1700.3,715.6 L1703.3,720.5 L1706.3,725.5 L1709.3,730.5 L1712.3,735.7 L1715.3,741.0 L1718.3,746.5 L1721.3,752.3 L1724.3,758.2 L1727.3,764.5 L1730.3,771.0 L1733.3,777.9 L1736.3,785.1 L1739.3,792.6 L1742.3,800.2 L1745.3,808.1 L1748.3,816.1 L1751.3,824.2 L1754.3,832.4 L1757.3,840.7 L1760.3,848.9 L1763.3,857.0 L1766.3,865.1 L1769.3,872.9 L1772.3,880.3 L1775.3,887.3 L1778.3,893.7 L1781.3,899.5 L1784.3,904.5 L1787.3,908.6 L1790.3,911.7 L1793.3,913.6 L1796.3,914.3 L1799.3,913.7 L1802.3,911.8 L1805.3,908.6 L1808.3,904.1 L1811.3,898.4 L1814.3,891.5 L1817.3,883.6 L1820.3,874.7 L1823.3,865.1 L1826.3,855.1 L1829.3,844.7 L1832.3,834.2 L1835.3,823.6 L1838.3,813.0 L1841.3,802.6 L1844.3,792.4 L1847.3,782.6 L1850.3,773.1 L1853.3,764.1 L1856.3,755.6 L1859.3,747.5 L1862.3,739.8 L1865.3,732.6 L1868.3,725.8 L1871.3,719.4 L1874.3,713.4 L1877.3,707.8 L1880.3,702.6 L1883.3,697.7 L1886.3,693.2 L1889.3,689.0 L1892.3,685.1 L1895.3,681.5 L1898.3,678.1 L1901.3,675.0 L1904.3,672.1 L1907.3,669.4 L1910.3,666.9 L1913.3,664.5 L1916.3,662.4 L1919.3,660.4 L1922.3,658.7 L1925.3,657.1 L1928.3,655.7 L1931.3,654.5 L1934.3,653.5 L1937.3,652.7 L1940.3,652.1 L1943.3,651.6 L1946.3,651.4 L1949.3,651.3 L1952.3,651.4 L1955.3,651.7 L1958.3,652.1 L1961.3,652.7 L1964.3,653.5 L1967.3,654.4 L1970.3,655.5 L1973.3,656.7 L1976.3,658.1 L1979.3,659.8 L1982.3,661.6 L1985.3,663.6 L1988.3,665.8 L1991.3,668.2 L1994.3,670.8 L1997.3,673.7 L2000.3,676.7 L2003.3,679.8 L2006.3,683.1 L2009.3,686.6 L2012.3,690.1 L2015.3,693.8 L2018.3,697.5 L2021.3,701.3 L2024.3,705.1 L2027.3,709.0 L2030.3,712.9 L2033.3,716.8 L2036.3,720.7 L2039.3,724.7 L2042.3,728.6 L2045.3,732.5 L2048.3,736.3 L2051.3,740.2 L2054.3,743.9 L2057.3,747.7 L2060.3,751.3 L2063.3,755.0 L2066.3,758.6 L2069.3,762.1 L2072.3,765.6 L2075.3,769.0 L2078.3,772.4 L2081.3,775.7 L2084.3,779.0 L2087.3,782.2 L2090.3,785.3 L2093.3,788.4 L2096.3,791.5 L2099.3,794.5 L2102.3,797.4 L2105.3,800.3 L2108.3,803.2 L2111.3,805.9 L2114.3,808.6 L2117.3,811.3 L2120.3,813.9 L2123.3,816.5 L2126.3,819.0 L2129.3,821.4 L2132.3,823.8 L2135.3,826.1 L2138.3,828.4 L2141.3,830.6 L2144.3,832.7 L2147.3,834.8 L2150.3,836.9 L2153.3,838.8 L2156.3,840.7 L2159.3,842.6 L2162.3,844.3 L2165.3,846.0 L2168.3,847.6 L2171.3,849.1 L2174.3,850.5 L2177.3,851.8 L2180.3,853.1 L2183.3,854.2 L2186.3,855.2 L2189.3,856.2 L2192.3,857.0 L2195.3,857.7 L2198.3,858.3 L2201.3,858.9 L2204.3,859.3 L2207.3,859.5 L2210.3,859.7 L2213.3,859.7 L2216.3,859.7 L2219.3,859.5 L2222.3,859.3 L2225.3,859.1 L2228.3,858.8 L2228.8,858.7" fill="none" stroke="#3f87e0" stroke-width="5" stroke-linecap="round"/>
<line x1="1242" y1="652" x2="1242" y2="1024" stroke="#1e1e1e" stroke-width="2.2" stroke-dasharray="8.1 8.1" stroke-dashoffset="5.8"/>
<circle cx="1241.6" cy="643.8" r="13.2" fill="#fff" stroke="#2b2b2b" stroke-width="5.4"/>
<path d="M1202,534 Q1202,526 1210,526 L1393.7,526 Q1401.7,526 1401.7,534 L1401.7,599.4 Q1401.7,607.4 1393.7,607.4 L1255.4,607.4 L1242,620.6 L1228.9,607.4 L1210,607.4 Q1202,607.4 1202,599.4 Z" fill="#303030"/>
</svg><div class="t" style="font-size:27px;color:#ffffff;font-weight:700;top:539.14px;letter-spacing:1.5px;left:1218.8px;">$84.905.62</div><div class="t" style="font-size:23px;color:#9a9a9a;font-weight:400;top:569.33px;left:1218.8px;">MAY 2024</div><div class="t" style="font-size:23.5px;color:#8a8a8a;font-weight:400;top:546.80px;left:579px;">$100k+</div><div class="t" style="font-size:23.5px;color:#8a8a8a;font-weight:400;top:637.02px;left:579px;">$80k</div><div class="t" style="font-size:23.5px;color:#8a8a8a;font-weight:400;top:727.24px;left:579px;">$60k</div><div class="t" style="font-size:23.5px;color:#8a8a8a;font-weight:400;top:817.46px;left:579px;">$40k</div><div class="t" style="font-size:23.5px;color:#8a8a8a;font-weight:400;top:907.68px;left:579px;">$20k</div><div class="t" style="font-size:23.5px;color:#8a8a8a;font-weight:400;top:997.90px;left:579px;">&gt;$1k</div><div class="t" style="font-size:22.5px;color:#8a8a8a;font-weight:400;top:1048.25px;left:85px;width:1200px;text-align:center;">Jan</div><div class="t" style="font-size:22.5px;color:#8a8a8a;font-weight:400;top:1048.25px;left:222px;width:1200px;text-align:center;">Feb</div><div class="t" style="font-size:22.5px;color:#8a8a8a;font-weight:400;top:1048.25px;left:361px;width:1200px;text-align:center;">Mar</div><div class="t" style="font-size:22.5px;color:#8a8a8a;font-weight:400;top:1048.25px;left:500px;width:1200px;text-align:center;">Apr</div><div class="t" style="font-size:22.5px;color:#8a8a8a;font-weight:400;top:1048.25px;left:639px;width:1200px;text-align:center;">May</div><div class="t" style="font-size:22.5px;color:#8a8a8a;font-weight:400;top:1048.25px;left:779px;width:1200px;text-align:center;">Jun</div><div class="t" style="font-size:22.5px;color:#8a8a8a;font-weight:400;top:1048.25px;left:914px;width:1200px;text-align:center;">Jul</div><div class="t" style="font-size:22.5px;color:#8a8a8a;font-weight:400;top:1048.25px;left:1050px;width:1200px;text-align:center;">Aug</div><div class="t" style="font-size:22.5px;color:#8a8a8a;font-weight:400;top:1048.25px;left:1190px;width:1200px;text-align:center;">Sep</div><div class="t" style="font-size:22.5px;color:#8a8a8a;font-weight:400;top:1048.25px;left:1329px;width:1200px;text-align:center;">Oct</div><div class="t" style="font-size:22.5px;color:#8a8a8a;font-weight:400;top:1048.25px;left:1468px;width:1200px;text-align:center;">Nov</div><div class="t" style="font-size:22.5px;color:#8a8a8a;font-weight:400;top:1048.25px;left:1608px;width:1200px;text-align:center;">Dec</div><div style="position:absolute;left:544px;top:1132px;width:852px;height:568px;background:#fff;border:2px solid #dadada;border-top-color:#e2e2e2;border-bottom-color:#d0d0d0;border-radius:15px;box-sizing:border-box;box-shadow:0 1px 3px rgba(0,0,0,0.05);"></div><div class="t" style="font-size:26.3px;color:#8a8a8a;font-weight:400;top:1174.13px;left:577.5px;">Earnings</div><div class="t" style="font-size:26.2px;color:#8a8a8a;font-weight:400;top:1174.42px;left:1237.5px;">Weekly</div><svg style="position:absolute;left:1333.5px;top:1176.4px;" width="27.700000000000045" height="20.59999999999991" viewBox="0 0 27.700000000000045 20.59999999999991"><path d="M5.6,5.1 L13.9,15.5 L22.1,5.1" fill="none" stroke="#8a8a8a" stroke-width="3.2"/></svg><div class="t" style="font-size:66px;color:#2b2b2b;font-weight:400;top:1227.12px;left:577px;">$439,296.00</div><svg style="position:absolute;left:576px;top:1302px;" width="32" height="32" viewBox="0 0 32 32"><circle cx="16" cy="16" r="16" fill="#e3f4eb"/><path d="M16,24 L16,8.8 M8.7,16.7 L16,8.8 L23.3,16.7" fill="none" stroke="#56b282" stroke-width="1.9"/></svg><div class="t" style="font-size:22.7px;color:#5a5a5a;font-weight:400;top:1307.28px;left:615.2px;">12.59%</div><svg style="position:absolute;left:0px;top:1134px;" width="1400" height="486" viewBox="0 0 1400 486"><g transform="translate(0,-1134)"><line x1="576" y1="1430.5" x2="1364" y2="1430.5" stroke="#e2e2e2" stroke-width="2" stroke-dasharray="15.75 15.75" stroke-dashoffset="7.5"/><line x1="576" y1="1511.5" x2="1364" y2="1511.5" stroke="#e2e2e2" stroke-width="2" stroke-dasharray="15.75 15.75" stroke-dashoffset="7.5"/><line x1="576" y1="1592.3" x2="1364" y2="1592.3" stroke="#e2e2e2" stroke-width="2" stroke-dasharray="15.75 15.75" stroke-dashoffset="7.5"/><rect x="785.2" y="1606" width="32" height="94" rx="8" fill="#e2e2e2"/><rect x="890.8" y="1465.6" width="32" height="234.4000000000001" rx="8" fill="#438ade"/><rect x="1000.9" y="1615.9" width="32" height="84.09999999999991" rx="8" fill="#e2e2e2"/><rect x="1114" y="1503.9" width="32" height="196.0999999999999" rx="8" fill="#e2e2e2"/><rect x="1208" y="1561.7" width="32" height="138.29999999999995" rx="8" fill="#e2e2e2"/></g></svg><div class="t" style="font-size:24px;color:#8a8a8a;font-weight:400;top:1401.88px;left:577.3px;">$20k</div><div class="t" style="font-size:24px;color:#8a8a8a;font-weight:400;top:1482.88px;left:577.3px;">$15k</div><div class="t" style="font-size:24px;color:#8a8a8a;font-weight:400;top:1563.68px;left:577.3px;">$10k</div><div style="position:absolute;left:1412px;top:1132px;width:852px;height:240px;background:#fff;border:2px solid #dadada;border-top-color:#e2e2e2;border-bottom-color:#d0d0d0;border-radius:15px;box-sizing:border-box;box-shadow:0 1px 3px rgba(0,0,0,0.05);"></div><div class="t" style="font-size:27px;color:#5a5a5a;font-weight:400;top:1170.94px;left:1445.4px;">Customers</div><div style="position:absolute;left:1444px;top:1236px;width:98px;height:98px;background:#dff0e8;border-radius:16px;"></div><svg style="position:absolute;left:1440px;top:1232px;" width="106" height="106" viewBox="0 0 106 106">
<path d="M19.9,58.8 Q19.9,50.8 27.9,50.8 L32,50.8 Q39.5,50.8 39.5,58.8 L39.5,77.5 L22.9,77.5 Q19.9,77.5 19.9,74.5 Z" fill="#1f2860"/>
<path d="M30,50.8 L32,50.8 Q39.5,50.8 39.5,58.8 L39.5,77.5 L30,77.5 Z" fill="#11152b"/>
<circle cx="30" cy="39.5" r="7" fill="#1f2860"/><path d="M30,32.5 A7,7 0 0 1 30,46.5 Z" fill="#11152b"/>
<path d="M67,58.8 Q67,50.8 75,50.8 L78,50.8 Q86,50.8 86,58.8 L86,74.5 Q86,77.5 83,77.5 L67,77.5 Z" fill="#1f2860"/>
<path d="M76,50.8 L78,50.8 Q86,50.8 86,58.8 L86,74.5 Q86,77.5 83,77.5 L76,77.5 Z" fill="#11152b"/>
<circle cx="76" cy="39.5" r="7" fill="#1f2860"/><path d="M76,32.5 A7,7 0 0 1 76,46.5 Z" fill="#11152b"/>
<path d="M35.8,68 Q35.8,50.8 53,50.8 Q70.2,50.8 70.2,68 L70.2,78 Q70.2,81.9 66.3,81.9 L39.7,81.9 Q35.8,81.9 35.8,78 Z" fill="#94bf8a" stroke="#dff0e8" stroke-width="0"/>
<path d="M53,50.8 Q70.2,50.8 70.2,68 L70.2,78 Q70.2,81.9 66.3,81.9 L53,81.9 Z" fill="#7bb088"/>
<circle cx="53" cy="35.1" r="11" fill="#94bf8a"/><path d="M53,24.1 A11,11 0 0 1 53,46.1 Z" fill="#7bb088"/>
</svg><div class="t" style="font-size:66px;color:#2b2b2b;font-weight:400;top:1236.12px;left:1568px;">6,095</div><svg style="position:absolute;left:1752px;top:1259.8px;" width="32" height="32" viewBox="0 0 32 32"><circle cx="16" cy="16" r="16" fill="#e3f4eb"/><path d="M16,24 L16,8.8 M8.7,16.7 L16,8.8 L23.3,16.7" fill="none" stroke="#56b282" stroke-width="1.9"/></svg><div class="t" style="font-size:23.2px;color:#5a5a5a;font-weight:400;top:1264.66px;left:1791.4px;">28%</div><div class="t" style="font-size:26.8px;color:#8a8a8a;font-weight:400;top:1307.81px;left:1568px;"><b style="color:#5a5a5a">700</b> Paying Paying</div><div style="position:absolute;left:2037px;top:1236px;width:2px;height:104px;background:#e2e2e2;"></div><div class="t" style="font-size:64px;color:#2b2b2b;font-weight:400;top:1247.81px;left:2071.9px;">40%</div><div class="t" style="font-size:26.5px;color:#5a5a5a;font-weight:400;top:1315.56px;left:2071.9px;">Conversion</div><div style="position:absolute;left:1412px;top:1389px;width:852px;height:311px;background:#fff;border:2px solid #dadada;border-top-color:#e2e2e2;border-bottom-color:#d0d0d0;border-radius:15px;box-sizing:border-box;box-shadow:0 1px 3px rgba(0,0,0,0.05);"></div><div class="t" style="font-size:33.3px;color:#111;font-weight:700;top:1422.80px;left:1446px;">Visitors/Top Locations</div><div class="t" style="font-size:26.5px;color:#8a8a8a;font-weight:400;top:1428.26px;left:2116.8px;">Today</div><svg style="position:absolute;left:2195.5px;top:1430.7px;" width="30.199999999999818" height="20.899999999999864" viewBox="0 0 30.199999999999818 20.899999999999864"><path d="M5.6,5.1 L15.1,15.8 L24.6,5.1" fill="none" stroke="#8a8a8a" stroke-width="3.2"/></svg><div class="t" style="font-size:63px;color:#2b2b2b;font-weight:400;top:1508.46px;left:1446px;">7,695</div><svg style="position:absolute;left:1613.7px;top:1516px;" width="32" height="32" viewBox="0 0 32 32"><circle cx="16" cy="16" r="16" fill="#e3f4eb"/><path d="M16,24 L16,8.8 M8.7,16.7 L16,8.8 L23.3,16.7" fill="none" stroke="#56b282" stroke-width="1.9"/></svg><div class="t" style="font-size:23.5px;color:#5a5a5a;font-weight:400;top:1520.70px;left:1652.8px;">28%</div><div class="t" style="font-size:27.3px;color:#5a5a5a;font-weight:400;top:1579.69px;left:1446px;">Visitors</div><div class="t" style="font-size:66px;color:#2b2b2b;font-weight:400;top:1505.92px;right:651.5px;text-align:right;">64</div><div class="t" style="font-size:27px;color:#5a5a5a;font-weight:400;top:1579.94px;right:649.0999999999999px;text-align:right;">Cities</div><div style="position:absolute;left:1819px;top:1619px;width:38px;height:21px;background:#3f87e0;border-radius:50% 50% 0 0/100% 100% 0 0;"></div><div style="position:absolute;left:2280px;top:276px;width:536px;height:394px;background:#fff;border:2px solid #dadada;border-top-color:#e2e2e2;border-bottom-color:#d0d0d0;border-radius:15px;box-sizing:border-box;box-shadow:0 1px 3px rgba(0,0,0,0.05);"></div><div class="t" style="font-size:33.5px;color:#111;font-weight:700;top:309.94px;left:2314px;">Debt</div><div class="t" style="font-size:62px;color:#2b2b2b;font-weight:400;top:385.10px;left:2314px;">$17.00</div><div class="t" style="font-size:27.4px;line-height:40px;color:#666;font-weight:400;top:446.10px;left:2314px;width:460px;white-space:normal;">You have <b style="color:#2b2b2b">$3 left</b> to reach<br>your limit.</div><div style="position:absolute;left:2312px;top:558px;width:472px;height:80px;background:#2e2e2e;border-radius:20px;"></div><div class="t" style="font-size:28.5px;color:#fff;font-weight:700;top:583.57px;left:1948px;width:1200px;text-align:center;">Pay</div><div style="position:absolute;left:2280px;top:686px;width:536px;height:922px;background:#fff;border:2px solid #dadada;border-top-color:#e2e2e2;border-bottom-color:#d0d0d0;border-radius:15px;box-sizing:border-box;box-shadow:0 1px 3px rgba(0,0,0,0.05);"></div><div style="position:absolute;left:2313px;top:718.7px;width:470px;height:538.3px;background:#fdf9ec;border:2px solid #efe4c2;border-radius:20px;box-sizing:border-box;"></div><svg style="position:absolute;left:2508px;top:756px;" width="80" height="80" viewBox="0 0 80 80">
<path d="M23.7,54.1 L30.9,57.4 L27.6,66.8 L19,68.7 Z" fill="#fbe38a"/>
<path d="M30.9,57.4 L38.1,59.6 L32,74 L27.6,66.8 Z" fill="#f7d46c"/>
<path d="M42,59.6 L49.1,57.4 L52.5,66.8 L48,74 Z" fill="#fbe38a"/>
<path d="M49.1,57.4 L56.3,54.1 L61,68.7 L52.5,66.8 Z" fill="#f7d46c"/>
<path d="M40.00,10.00 L43.69,11.69 L47.73,11.22 L50.71,13.97 L54.69,14.77 L56.69,18.31 L60.23,20.31 L61.03,24.29 L63.78,27.27 L63.31,31.31 L65.00,35.00 L63.31,38.69 L63.78,42.73 L61.03,45.71 L60.23,49.69 L56.69,51.69 L54.69,55.23 L50.71,56.03 L47.73,58.78 L43.69,58.31 L40.00,60.00 L36.31,58.31 L32.27,58.78 L29.29,56.03 L25.31,55.23 L23.31,51.69 L19.77,49.69 L18.97,45.71 L16.22,42.73 L16.69,38.69 L15.00,35.00 L16.69,31.31 L16.22,27.27 L18.97,24.29 L19.77,20.31 L23.31,18.31 L25.31,14.77 L29.29,13.97 L32.27,11.22 L36.31,11.69 Z" fill="#e2b052"/>
<circle cx="40" cy="35" r="18.1" fill="#f7d46c"/>
<path d="M40,16.9 A18.1,18.1 0 0 0 40,53.1 A21,21 0 0 0 40,16.9 Z" fill="#fbe38a"/>
<path d="M40.00,22.60 L43.17,31.23 L52.36,31.58 L45.14,37.27 L47.64,46.12 L40.00,41.00 L32.36,46.12 L34.86,37.27 L27.64,31.58 L36.83,31.23 Z" fill="#e2b052"/></svg><div class="t" style="font-size:65.6px;color:#2b2b2b;font-weight:400;top:842.76px;left:1948px;width:1200px;text-align:center;">647</div><div class="t" style="font-size:27px;color:#8a8a8a;font-weight:400;top:913.14px;left:1948px;width:1200px;text-align:center;">Transactions</div><svg style="position:absolute;left:2330px;top:970px;" width="440" height="48" viewBox="0 0 440 48">
<line x1="44" y1="24" x2="130" y2="24" stroke="#5fb386" stroke-width="4"/>
<line x1="175.6" y1="24" x2="260.4" y2="24" stroke="#e3e3e3" stroke-width="4"/>
<line x1="306" y1="24" x2="391" y2="24" stroke="#e3e3e3" stroke-width="4"/>
<circle cx="22" cy="24" r="16" fill="#5fb386"/>
<path d="M14.5,24.5 L19.5,29 L29,19.5" fill="none" stroke="#fff" stroke-width="2.6"/>
<circle cx="152.6" cy="24" r="13" fill="#fff" stroke="#5fb386" stroke-width="6"/>
<circle cx="283" cy="24" r="16" fill="#aaaaaa"/>
<circle cx="414" cy="24" r="16" fill="#aaaaaa"/>
</svg><div class="t" style="font-size:27.4px;line-height:40px;color:#5a5a5a;font-weight:400;top:1042.50px;left:2336.5px;width:440px;white-space:normal;">Impressive! <b style="color:#2b2b2b">89 transactions</b> this<br>week, up by 9%. You're 72%<br>closer to your next milestone.</div><div class="t" style="font-size:27.4px;color:#3f87e0;font-weight:400;top:1201.10px;left:1948px;width:1200px;text-align:center;">Learn more</div><div style="position:absolute;left:2282px;top:1289px;width:532px;height:2px;background:#e2e2e2;"></div><div class="t" style="font-size:33.2px;color:#111;font-weight:700;top:1324.29px;left:2313.4px;">Announcement</div><div class="t" style="font-size:27.5px;line-height:40.4px;color:#666;font-weight:400;top:1368.17px;left:2315px;width:460px;white-space:normal;">Push important announcements to<br>your customers</div><div style="position:absolute;left:2312px;top:1496px;width:472px;height:80px;background:#2e2e2e;border-radius:20px;"></div><div class="t" style="font-size:28.9px;color:#fff;font-weight:700;top:1521.13px;left:1948px;width:1200px;text-align:center;">Push Announcement</div>
</body></html>
